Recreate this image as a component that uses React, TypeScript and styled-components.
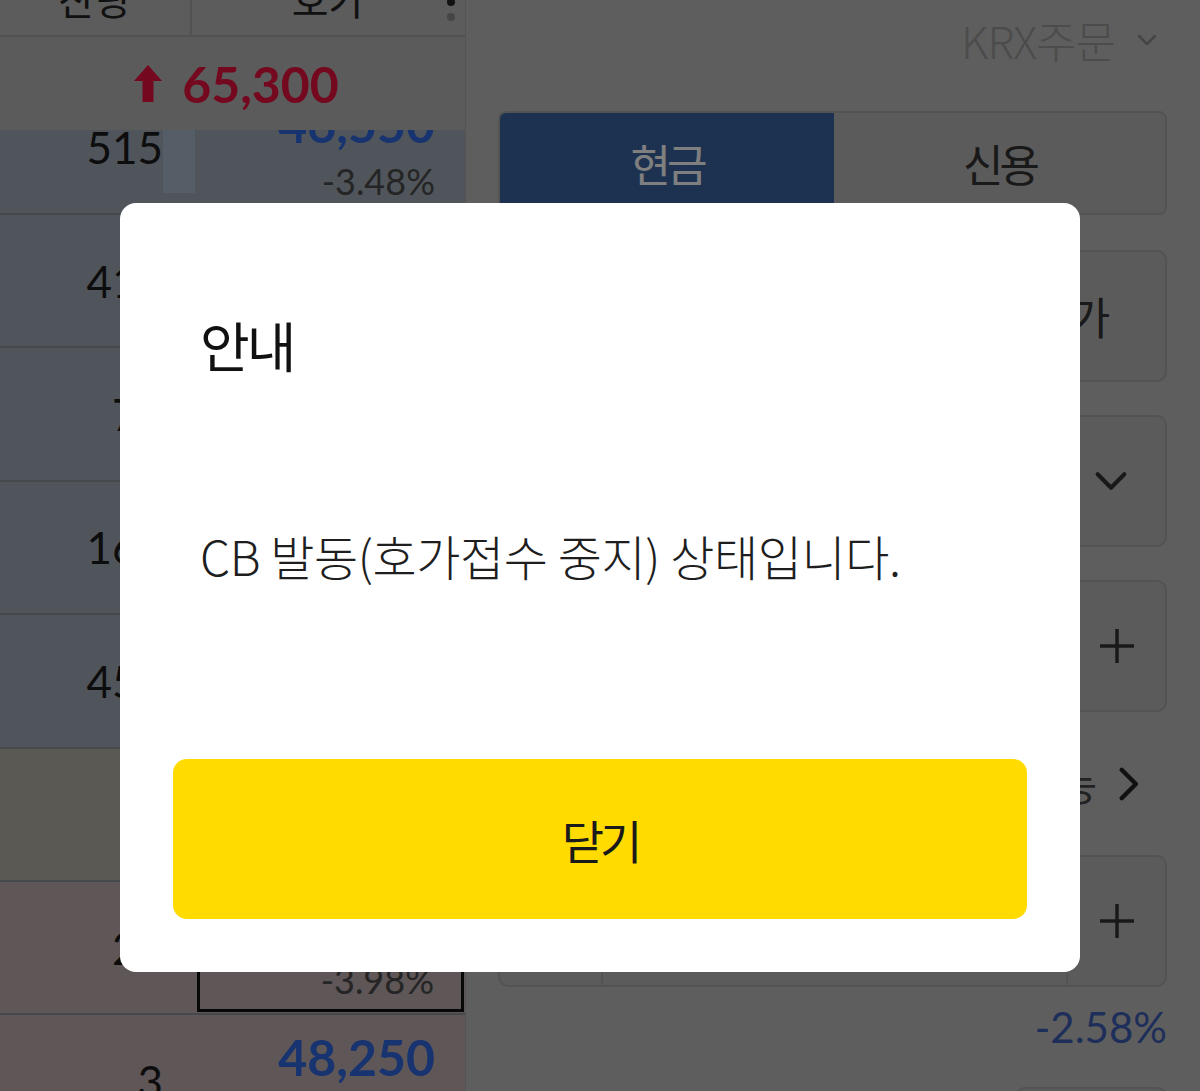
import styled, { createGlobalStyle } from 'styled-components'

const GlobalStyle = createGlobalStyle`
  html, body {
    margin: 0;
    padding: 0;
  }
  body {
    width: 1200px;
    height: 1091px;
    overflow: hidden;
    background: #bcbcbc;
    font-family: 'Noto Sans CJK KR', 'Noto Sans', sans-serif;
  }
  * {
    box-sizing: border-box;
  }
`

const Screen = styled.div`
  position: relative;
  width: 1200px;
  height: 1091px;
  display: flex;
  overflow: hidden;
  background: #bcbcbc;
`

/* ---------- order book (left) ---------- */

const Book = styled.div`
  width: 466px;
  flex-shrink: 0;
  display: flex;
  flex-direction: column;
  border-right: 1px solid #a8a8a8;
  overflow: hidden;

  & > * {
    flex-shrink: 0;
  }
`

const BookHeader = styled.div`
  position: relative;
  height: 37px;
  display: grid;
  grid-template-columns: 192px 1fr;
  background: #b8b8b8;
  border-bottom: 2px solid #a4a4a4;
`

const HeaderCell = styled.div<{ $divider?: boolean }>`
  display: flex;
  justify-content: center;
  overflow: hidden;
  border-right: ${(p) => (p.$divider ? '2px solid #a4a4a4' : 'none')};
  font-size: 40px;
  line-height: 40px;
  color: #222;

  span {
    margin-top: -22px;
  }
`

const Kebab = styled.svg`
  position: absolute;
  right: 8px;
  top: 0;
`

const PriceRow = styled.div`
  height: 93px;
  display: flex;
  align-items: center;
  justify-content: center;
  gap: 20px;
  background: #b6b6b6;
  color: #e8103e;
  font-family: Lato, 'Liberation Sans', sans-serif;
  font-weight: 700;
  font-size: 50px;
  padding-left: 8px;
`

const Clip = styled.div<{ $height: number }>`
  height: ${(p) => p.$height}px;
  display: flex;
  flex-direction: column;
  justify-content: flex-end;
  overflow: hidden;

  & > * {
    flex-shrink: 0;
  }
`

const rowColors = {
  ask: '#a0aab6',
  mid: '#b4b2a8',
  bid: '#bcacae',
}

type Side = keyof typeof rowColors

const OrderRow = styled.div<{ $side: Side }>`
  height: 133.4px;
  display: grid;
  grid-template-columns: 195px 1fr;
  background: ${(p) => rowColors[p.$side]};
  border-bottom: 2px solid #8c9298;
`

const QtyCell = styled.div`
  display: flex;
  align-items: center;
  justify-content: flex-end;
  font-family: Lato, 'Liberation Sans', sans-serif;
  font-size: 44px;
  color: #1a1a1a;
`

const VolumeBar = styled.div<{ $filled?: boolean }>`
  width: 32px;
  align-self: stretch;
  margin: 20px 0 20px 0;
  background: ${(p) => (p.$filled ? '#aabdcf' : 'transparent')};
`

const PriceCell = styled.div<{ $current?: boolean }>`
  display: flex;
  flex-direction: column;
  align-items: flex-end;
  justify-content: space-between;
  padding: ${(p) => (p.$current ? '11px 27px 9px 0' : '14px 30px 12px 0')};
  margin: ${(p) => (p.$current ? '2px 1px 1px 2px' : '0')};
  border: ${(p) => (p.$current ? '3px solid #111' : 'none')};
  font-family: Lato, 'Liberation Sans', sans-serif;
`

const Price = styled.div`
  font-size: 50px;
  line-height: 56px;
  font-weight: 700;
  color: #2e66e0;
`

const Rate = styled.div`
  font-size: 36px;
  line-height: 40px;
  color: #4a4a4a;
`

/* ---------- order form (right) ---------- */

const Form = styled.div`
  flex: 1;
  display: flex;
  flex-direction: column;
  padding: 0 33px 0 32px;

  & > * {
    flex-shrink: 0;
  }
`

const MarketSelect = styled.div`
  height: 80px;
  display: flex;
  align-items: center;
  justify-content: flex-end;
  gap: 20px;
  padding-right: 8px;
  font-size: 44px;
  font-weight: 300;
  letter-spacing: -1px;
  color: #989898;
`

const Tabs = styled.div`
  margin-top: 31px;
  height: 104px;
  display: grid;
  grid-template-columns: 334px 1fr;
  border: 2px solid #a6a6a6;
  border-radius: 8px;
  overflow: hidden;
  background: #b6b6b6;
`

const Tab = styled.div<{ $active?: boolean }>`
  display: flex;
  align-items: center;
  justify-content: center;
  font-size: 44px;
  letter-spacing: -4px;
  background: ${(p) => (p.$active ? '#3a64a2' : 'transparent')};
  color: ${(p) => (p.$active ? '#ffffff' : '#333')};
`

const FieldRow = styled.div<{ $gap?: number }>`
  margin-top: ${(p) => (p.$gap ?? 33)}px;
  height: 132px;
  display: flex;
  gap: 15px;
`

const Field = styled.div<{ $width?: number }>`
  flex: ${(p) => (p.$width ? `0 0 ${p.$width}px` : '1')};
  display: flex;
  align-items: center;
  justify-content: center;
  background: #b6b6b6;
  border: 2px solid #a6a6a6;
  border-radius: 10px;
  font-size: 44px;
  letter-spacing: -3px;
  color: #333;
`

const SelectField = styled(Field)`
  justify-content: space-between;
  padding: 0 34px 0 36px;
`

const Stepper = styled.div`
  flex: 1;
  display: grid;
  grid-template-columns: 103px 1fr 99px;
  background: #b6b6b6;
  border: 2px solid #a6a6a6;
  border-radius: 10px;
  overflow: hidden;
`

const StepButton = styled.div<{ $side: 'left' | 'right' }>`
  display: flex;
  align-items: center;
  justify-content: center;
  ${(p) => (p.$side === 'left' ? 'border-right' : 'border-left')}: 2px solid #a6a6a6;
  color: #333;
`

const StepValue = styled.div`
  display: flex;
  align-items: center;
  justify-content: flex-end;
  padding-right: 24px;
  font-family: Lato, 'Liberation Sans', sans-serif;
  font-size: 44px;
  color: #333;
`

const AvailableLink = styled.div`
  height: 143px;
  display: flex;
  align-items: center;
  justify-content: flex-end;
  gap: 14px;
  padding-right: 20px;
  font-size: 40px;
  letter-spacing: -2px;
  color: #444;
`

const ChangeRate = styled.div`
  height: 80px;
  display: flex;
  align-items: center;
  justify-content: flex-end;
  font-family: Lato, 'Liberation Sans', sans-serif;
  font-size: 42px;
  color: #3c5cb4;
`

const BottomRow = styled.div`
  margin-top: 20px;
  display: flex;
  justify-content: flex-end;
`

const SmallField = styled.div`
  width: 152px;
  height: 120px;
  background: #b6b6b6;
  border: 2px solid #a6a6a6;
  border-radius: 10px;
`

/* ---------- dialog ---------- */

const Overlay = styled.div`
  position: absolute;
  inset: 0;
  background: rgba(0, 0, 0, 0.5);
  display: flex;
  justify-content: center;
  align-items: flex-start;
  padding-top: 203px;
`

const Dialog = styled.div`
  width: 960px;
  background: #ffffff;
  border-radius: 16px;
  padding: 109px 53px 53px;
  display: flex;
  flex-direction: column;
`

const DialogTitle = styled.h2`
  margin: 0 0 0 27px;
  font-size: 54px;
  line-height: 65px;
  font-weight: 400;
  letter-spacing: -3px;
  color: #111;
`

const DialogMessage = styled.p`
  margin: 149px 0 0 27px;
  font-size: 48px;
  line-height: 58px;
  font-weight: 300;
  letter-spacing: -0.4px;
  color: #1e1e1e;
`

const CloseButton = styled.button`
  margin-top: 175px;
  height: 160px;
  border: none;
  border-radius: 14px;
  background: #ffdb00;
  font-family: 'Noto Sans CJK KR', 'Noto Sans', sans-serif;
  font-size: 46px;
  letter-spacing: -4px;
  color: #1a1a1a;
  cursor: pointer;
`

const rows: { side: Side; qty: string; price: string; rate: string; current?: boolean }[] = [
  { side: 'ask', qty: '412', price: '46,500', rate: '-3.58%' },
  { side: 'ask', qty: '72', price: '46,450', rate: '-3.69%' },
  { side: 'ask', qty: '164', price: '46,400', rate: '-3.79%' },
  { side: 'ask', qty: '458', price: '46,350', rate: '-3.89%' },
  { side: 'mid', qty: '', price: '', rate: '' },
  { side: 'bid', qty: '21', price: '48,300', rate: '-3.98%', current: true },
  { side: 'bid', qty: '3', price: '48,250', rate: '-4.08%' },
]

const Chevron = ({ dir, size, color, width = 3 }: { dir: 'down' | 'right'; size: number; color: string; width?: number }) => (
  <svg width={size} height={size} viewBox="0 0 24 24" fill="none" stroke={color} strokeWidth={width} strokeLinecap="round" strokeLinejoin="round">
    {dir === 'down' ? <polyline points="4,8 12,16 20,8" /> : <polyline points="8,3 17,12 8,21" />}
  </svg>
)

const Plus = () => (
  <svg width="36" height="36" viewBox="0 0 36 36" stroke="#333" strokeWidth="3.5">
    <line x1="18" y1="1" x2="18" y2="35" />
    <line x1="1" y1="18" x2="35" y2="18" />
  </svg>
)

const Minus = () => (
  <svg width="36" height="36" viewBox="0 0 36 36" stroke="#333" strokeWidth="3.5">
    <line x1="1" y1="18" x2="35" y2="18" />
  </svg>
)

const App = () => {
  return (
    <>
      <GlobalStyle />
      <Screen>
        <Book>
          <BookHeader>
            <HeaderCell $divider>
              <span>잔량</span>
            </HeaderCell>
            <HeaderCell>
              <span>호가</span>
            </HeaderCell>
            <Kebab width="12" height="24" viewBox="0 0 12 24">
              <circle cx="6" cy="2" r="4" fill="#222" />
              <circle cx="6" cy="17" r="4" fill="#8a8a8a" />
            </Kebab>
          </BookHeader>
          <PriceRow>
            <svg width="28" height="37" viewBox="0 0 28 37">
              <path d="M14 0 L28 16 L19.5 16 L19.5 37 L8.5 37 L8.5 16 L0 16 Z" fill="#e8103e" />
            </svg>
            <span>65,300</span>
          </PriceRow>
          <Clip $height={85}>
            <OrderRow $side="ask">
              <QtyCell>
                515
                <VolumeBar $filled />
              </QtyCell>
              <PriceCell>
                <Price>46,550</Price>
                <Rate>-3.48%</Rate>
              </PriceCell>
            </OrderRow>
          </Clip>
          {rows.map((row, i) => (
            <OrderRow key={i} $side={row.side}>
              <QtyCell>
                {row.qty}
                <VolumeBar />
              </QtyCell>
              <PriceCell $current={row.current}>
                <Price>{row.price}</Price>
                <Rate>{row.rate}</Rate>
              </PriceCell>
            </OrderRow>
          ))}
        </Book>

        <Form>
          <MarketSelect>
            <span>KRX주문</span>
            <Chevron dir="down" size={24} color="#8a8a8a" width={2.5} />
          </MarketSelect>
          <Tabs>
            <Tab $active>현금</Tab>
            <Tab>신용</Tab>
          </Tabs>
          <FieldRow $gap={35}>
            <Field>지정가</Field>
            <Field $width={232}>현재가</Field>
          </FieldRow>
          <FieldRow>
            <SelectField>
              <span>보통</span>
              <Chevron dir="down" size={40} color="#333" width={2.5} />
            </SelectField>
          </FieldRow>
          <FieldRow>
            <Stepper>
              <StepButton $side="left">
                <Minus />
              </StepButton>
              <StepValue>46,550</StepValue>
              <StepButton $side="right">
                <Plus />
              </StepButton>
            </Stepper>
          </FieldRow>
          <AvailableLink>
            <span>주문가능</span>
            <Chevron dir="right" size={38} color="#222" width={2.8} />
          </AvailableLink>
          <FieldRow $gap={0}>
            <Stepper>
              <StepButton $side="left">
                <Minus />
              </StepButton>
              <StepValue>0</StepValue>
              <StepButton $side="right">
                <Plus />
              </StepButton>
            </Stepper>
          </FieldRow>
          <ChangeRate>-2.58%</ChangeRate>
          <BottomRow>
            <SmallField />
          </BottomRow>
        </Form>

        <Overlay>
          <Dialog>
            <DialogTitle>안내</DialogTitle>
            <DialogMessage>CB 발동(호가접수 중지) 상태입니다.</DialogMessage>
            <CloseButton>닫기</CloseButton>
          </Dialog>
        </Overlay>
      </Screen>
    </>
  )
}

export default App
